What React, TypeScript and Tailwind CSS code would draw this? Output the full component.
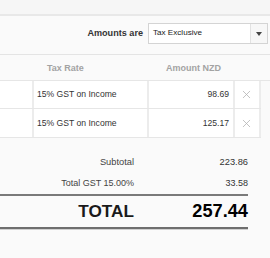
import { X } from 'lucide-react';

const rows = [
  { rate: '15% GST on Income', amount: '98.69' },
  { rate: '15% GST on Income', amount: '125.17' },
];

function LineRow({ rate, amount, h }: { rate: string; amount: string; h: string }) {
  return (
    <div className={`flex w-[261px] border-b border-[#e6e6e6] ${h}`}>
      <div className="w-[34px] bg-white border-r-2 border-[#ececec]" />
      <div className="w-[115px] bg-white border-r-2 border-[#ececec] flex items-center pl-[3px] text-[8.6px] text-[#333]">{rate}</div>
      <div className="w-[86px] bg-white border-r-2 border-[#ececec] flex items-center justify-end pr-[4px] text-[8.6px] text-[#333]">{amount}</div>
      <div className="flex-1 bg-white border-r-2 border-[#ececec] flex items-center justify-center pr-[1px]">
        <X className="w-[13px] h-[13px] text-[#b0b0b0]" strokeWidth={1.4} />
      </div>
    </div>
  );
}

export default function App() {
  return (
    <div className="w-[270px] h-[258px] overflow-hidden bg-[#fafafa] font-['Liberation_Sans',Arial,sans-serif]">
      <div className="h-[14px] bg-[#f6f6f6] border-b-2 border-[#e8e8e8] box-content" />

      {/* toolbar */}
      <div className="flex justify-end items-center pt-[7px] pr-[2px]">
        <span className="text-[9.1px] font-bold text-[#333] mr-[5px]">Amounts are</span>
        <div className="w-[120px] h-[21px] flex border border-[#d4d4d4] bg-white">
          <div className="flex-1 flex items-center pl-[4px] text-[8.1px] text-[#222]">Tax Exclusive</div>
          <div className="w-[17px] border-l border-[#e2e2e2] bg-[#f7f7f7] flex items-center justify-center">
            <span className="block w-0 h-0 border-l-[3px] border-r-[3px] border-t-[4px] border-l-transparent border-r-transparent border-t-[#444]" />
          </div>
        </div>
      </div>

      {/* table */}
      <div className="mt-[10px] border-t border-[#e4e4e4]">
        <div className="flex h-[26px] items-center pt-[2px] border-b border-[#e6e6e6] text-[9px] font-bold text-[#a3a3a3]">
          <div className="w-[47px]" />
          <div className="w-[40px]">Tax Rate</div>
          <div className="w-[79px]" />
          <div>Amount NZD</div>
        </div>
        <LineRow rate={rows[0].rate} amount={rows[0].amount} h="h-[28px]" />
        <LineRow rate={rows[1].rate} amount={rows[1].amount} h="h-[29px]" />
      </div>

      {/* totals */}
      <div className="w-[248px] pt-[15px]">
        <div className="flex items-center h-[20px] text-[9.3px] text-[#444]">
          <div className="w-[134px] text-right">Subtotal</div>
          <div className="flex-1 text-right text-[#333]">223.86</div>
        </div>
        <div className="flex items-center h-[21px] text-[9px] text-[#444]">
          <div className="w-[134px] text-right">Total GST 15.00%</div>
          <div className="flex-1 text-right text-[#333]">33.58</div>
        </div>
        <div className="mt-[0px] border-t-2 border-[#7a7a7a]" />
        <div className="flex items-center h-[31px] font-bold text-[#1a1a1a]">
          <div className="w-[134px] text-right text-[17.2px]">TOTAL</div>
          <div className="flex-1 text-right text-[18.2px] text-black">257.44</div>
        </div>
        <div className="border-t-2 border-[#6e6e6e]" />
        <div className="border-t border-[#d0d0d0]" />
      </div>
    </div>
  );
}
